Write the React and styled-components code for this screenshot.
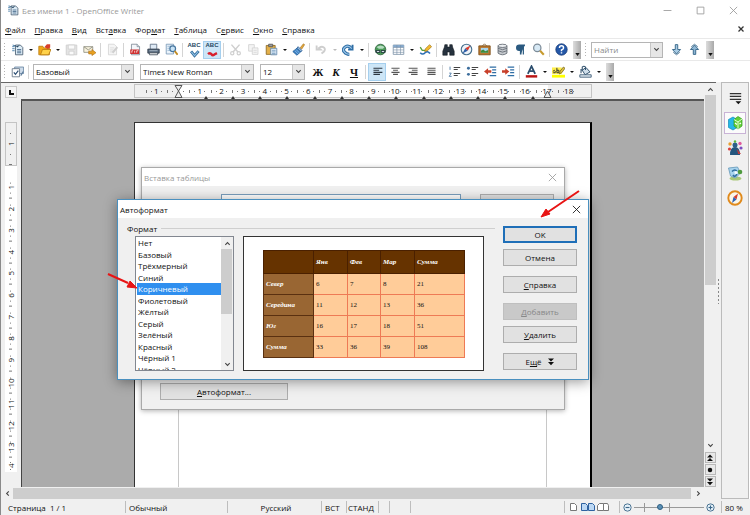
import React from 'react'
import styled, { createGlobalStyle, css } from 'styled-components'

const GlobalStyle = createGlobalStyle`
  * {
    box-sizing: border-box;
  }
  body {
    margin: 0;
    background: #fff;
    color: #111;
    font: 8px/11px 'Open Sans', 'Noto Sans', sans-serif;
  }
  button,
  input,
  select {
    font: inherit;
    color: inherit;
    margin: 0;
    padding: 0;
    border: 0;
    border-radius: 0;
    background: none;
  }
  ul {
    list-style: none;
    margin: 0;
    padding: 0;
  }
`

/* ---------- icons, all on a 16x16 canvas ---------- */

const sheet = 'M3 1.5h7l3 3v10H3z'

const shapes = {
  writer: (
    <>
      <path d="M1.500 4.500h3M1.500 7h3M1.500 9.500h3M2 2.500l3 1" stroke="#2c6a9a" fill="none" />
      <path d="M5.500 2.500h6l3 3v9h-9z" fill="#dcebf5" stroke="#41566b" />
      <path d="M3 2l4 2 4-1.500-3 3z" fill="#23445f" />
      <path d="M7.500 8h5M7.500 10h5M7.500 12h5" stroke="#3a5e80" />
    </>
  ),
  open: (
    <>
      <path d="M1 4h5l1 2h7v8.500H1z" fill="#f0a818" stroke="#b87a10" />
      <path d="M3 14.500l2.500-6.500H16l-3 6.500z" fill="#ffd24a" stroke="#b87a10" />
      <path d="M8 5l3-3.500h4v4l-3 2z" fill="#d8402c" />
    </>
  ),
  save: (
    <>
      <path d="M1.500 2.500h13v12h-13z" fill="#e4e4e4" stroke="#cdcdcd" />
      <path d="M4 2.500h8v5H4zM5 10h6v4.500H5z" fill="#fafafa" stroke="#cfcfcf" />
    </>
  ),
  mail: (
    <>
      <path d="M1 4.500h11v7H1z" fill="#f7f2dd" stroke="#8d8d80" />
      <path d="M1 4.500l5.500 4 5.500-4" fill="none" stroke="#8d8d80" />
      <path d="M7 10h4V8l5 4-5 3.500v-2H7z" fill="#e8a020" stroke="#a86a10" strokeWidth=".7" />
    </>
  ),
  edit: (
    <>
      <path d={sheet} fill="#f5f5f5" stroke="#d4d4d4" />
      <path d="M5 6h5M5 8.500h4M5 11h3" stroke="#d8d8d8" />
      <path d="M8 12l6-7" stroke="#cfcfcf" strokeWidth="2.500" />
    </>
  ),
  pdf: (
    <>
      <path d={sheet} fill="#f4f6fa" stroke="#7b8794" />
      <path d="M10 1.500v3h3" fill="#fff" stroke="#7b8794" />
      <path d="M1.500 8h11v5.500h-11z" fill="#cf2c2c" />
      <path d="M3.500 12V9.500h1.500M7 9.500V12M9.500 12V9.500h2" stroke="#fff" fill="none" strokeWidth=".9" />
    </>
  ),
  print: (
    <>
      <path d="M4 1.500h8V8H4z" fill="#dfeaf5" stroke="#5a6b80" />
      <path d="M1 7.500h14v5H1z" fill="#56687c" stroke="#2d3947" />
      <path d="M3 12h10v2.500H3z" fill="#e9e9e9" stroke="#444f5c" />
      <path d="M3 9.500h10" stroke="#b9c5d2" />
    </>
  ),
  preview: (
    <>
      <path d="M1.500 1.500h9v12h-9z" fill="#eaf3fb" stroke="#7696b4" />
      <path d="M3 4h5M3 6.500h3M3 9h3" stroke="#8fb0cc" />
      <circle cx="9.500" cy="7" r="3.500" fill="#c8e2f5" stroke="#47769f" strokeWidth="1.500" />
      <path d="M12 10l3.500 4.500" stroke="#c18a20" strokeWidth="2.200" />
    </>
  ),
  spell: (
    <>
      <path d="M3 6.500l5 6L14 6" stroke="#2f6899" strokeWidth="4" fill="none" />
      <path d="M3.500 7l4.500 5.500L13.500 6.500" stroke="#8fc0e4" strokeWidth="1.500" fill="none" />
    </>
  ),
  autospell: (
    <path d="M1.500 10.500q3-3 5 0t5 0l3-1.500" stroke="#d8202c" strokeWidth="3.500" fill="none" />
  ),
  cut: (
    <>
      <path d="M3 2l8 9M13 2L5 11" stroke="#cfcfcf" strokeWidth="1.800" />
      <circle cx="4" cy="12.500" r="2" fill="none" stroke="#cfcfcf" strokeWidth="1.500" />
      <circle cx="12" cy="12.500" r="2" fill="none" stroke="#cfcfcf" strokeWidth="1.500" />
    </>
  ),
  copy: (
    <>
      <path d="M2 2h7v8H2z" fill="#f4f4f4" stroke="#d2d2d2" />
      <path d="M6.500 6h7v8h-7z" fill="#f4f4f4" stroke="#d2d2d2" />
      <path d="M8 9h4M8 11.500h4" stroke="#d8d8d8" />
    </>
  ),
  paste: (
    <>
      <path d="M1.500 3h11v11h-11z" fill="#e3b04b" stroke="#8a6520" />
      <path d="M4.500 1.500h5v3h-5z" fill="#9c9c9c" stroke="#555" />
      <path d="M7 6.500h7.500v8H7z" fill="#e6f0fa" stroke="#5b84ab" />
      <path d="M8.500 9h4.500M8.500 11h4.500M8.500 13h4.500" stroke="#6f98bd" />
    </>
  ),
  brush: (
    <>
      <path d="M10 6l4-5 1.500 1L12 7.500z" fill="#e7a93a" stroke="#9a6a18" strokeWidth=".7" />
      <path d="M7.500 4.500l5 5-2 1.500-4.500-4.500z" fill="#8fb6dc" stroke="#2a5d94" />
      <path d="M6 6.500l4.500 4.500L6 15l-5-4.500z" fill="#3c82c6" stroke="#235c95" />
      <path d="M3.500 9.500l4 4M5 8l4 4" stroke="#b7d6f0" strokeWidth=".7" />
    </>
  ),
  undo: (
    <path d="M2 3v5h5L5 6q4-3 6.500 0T8 13" fill="none" stroke="#cecece" strokeWidth="2.300" />
  ),
  redo: (
    <>
      <path d="M13 2v6H7.500" fill="none" stroke="#2f6ea5" strokeWidth="2.300" />
      <path d="M12 7Q8 2 4 5t-1 6q2 3 6 3" fill="none" stroke="#2f6ea5" strokeWidth="4" />
      <path d="M12 7Q8 2 4 5t-1 6q2 3 6 3" fill="none" stroke="#9cc7ea" strokeWidth="1.500" />
    </>
  ),
  globe: (
    <>
      <circle cx="8" cy="8" r="6.500" fill="#4b9a58" stroke="#2d5f3c" />
      <path d="M3 5q5-4 10 0l-2 2H6z" fill="#b5dcc0" />
      <path d="M2 10.500h5.500M8.500 10.500H14" stroke="#22303c" strokeWidth="3" />
      <path d="M3.500 10.500h3M9.500 10.500h3" stroke="#dfe8ee" strokeWidth="1.200" />
    </>
  ),
  table: (
    <>
      <path d="M1.500 2.500h13v11.500h-13z" fill="#fff" stroke="#7d93a8" />
      <path d="M1.500 2.500h13v3h-13z" fill="#86a9cc" />
      <path d="M1.500 5.500h13M1.500 8.500h13M1.500 11.500h13M6 2.500V14M10.500 2.500V14" stroke="#7d93a8" strokeWidth=".8" />
    </>
  ),
  draw: (
    <>
      <path d="M1.500 12q3 3 6 0t6 1" stroke="#2c6fb4" strokeWidth="2" fill="none" />
      <path d="M1.500 5l2.500 4h4" stroke="#58a03c" strokeWidth="1.600" fill="none" />
      <path d="M7 10.500l1-3.500 5-5 2.500 2.500-5 5z" fill="#f4b92c" stroke="#96701c" strokeWidth=".8" />
    </>
  ),
  find: (
    <path
      d="M3.500 2h3v3h3V2h3l.5 3 2 5v5H9.500v-4h-3v4H1v-5l2-5z"
      fill="#26323e"
      stroke="#10171e"
      strokeWidth=".7"
    />
  ),
  navigator: (
    <>
      <circle cx="8" cy="8" r="6.500" fill="#eef3f8" stroke="#47708f" strokeWidth="1.400" />
      <path d="M13 3L9.500 9.500l-3-3z" fill="#d93a2c" />
      <path d="M3 13l3.500-6.500 3 3z" fill="#2d5fa8" />
    </>
  ),
  gallery: (
    <>
      <path d="M5.500 3.500L8 1l2.500 2.500" fill="none" stroke="#7a5a2c" />
      <path d="M1 3.500h14v11H1z" fill="#b9762c" stroke="#7b4c16" />
      <path d="M3.500 6h9v6h-9z" fill="#a9d6ef" />
      <path d="M3.500 12V9.500l3-1.500 2.500 2 3.500-1.500V12z" fill="#3e8a3a" />
    </>
  ),
  database: (
    <>
      <path d="M2.500 3.500v9q5.500 4 11 0v-9z" fill="#c3c7cc" stroke="#5c646c" />
      <ellipse cx="8" cy="3.500" rx="5.500" ry="2" fill="#eceff2" stroke="#5c646c" />
      <path d="M2.500 6.500q5.500 3.500 11 0M2.500 9.500q5.500 3.500 11 0" stroke="#5c646c" fill="none" />
    </>
  ),
  marks: (
    <path d="M13.500 2.500H6.500a3.200 3.200 0 0 0 0 6.500H8V14M8.500 2.500V14M11.500 2.500V14" fill="#2b5a80" stroke="#2b5a80" strokeWidth="1.500" />
  ),
  zoom: (
    <>
      <circle cx="6.500" cy="6" r="4.500" fill="#d7e9f5" stroke="#7c8b98" strokeWidth="1.500" />
      <path d="M10 9.500l4.500 5" stroke="#c79a2e" strokeWidth="2.500" />
    </>
  ),
  help: (
    <>
      <circle cx="8" cy="8" r="7" fill="#2458a8" stroke="#173a78" />
      <path d="M5.500 6q0-2.500 2.500-2.500T10.500 6Q10.500 7.500 8 8.500V10M8 11.500v1.500" fill="none" stroke="#fff" strokeWidth="1.800" />
    </>
  ),
  down: (
    <>
      <path d="M6.500 2h3v6h3.500L8 13.500 3 8h3.500z" fill="#a8cbe4" stroke="#3b6a8c" strokeWidth="1.200" />
      <path d="M4 11.500l4 3 4-3" fill="none" stroke="#3b6a8c" />
    </>
  ),
  up: (
    <>
      <path d="M6.500 14h3V8H13L8 2.500 3 8h3.500z" fill="#8db6d4" stroke="#3b6a8c" strokeWidth="1.200" />
      <path d="M4 4.500l4-3 4 3" fill="none" stroke="#3b6a8c" />
    </>
  ),
  styles: (
    <>
      <path d="M4.500 2.500h11v8h-11z" fill="#cfdcea" stroke="#62809e" />
      <path d="M1.500 4.500h9v10h-9z" fill="#fff" stroke="#5f6f80" />
      <path d="M3.500 9l2 2.500L9 7" fill="none" stroke="#2d4f74" strokeWidth="1.500" />
      <path d="M12 13l3-5" stroke="#62809e" strokeWidth="1.500" />
    </>
  ),
  left: <path d="M3 4h11M3 6.500h7M3 9h11M3 11.500h8" stroke="#2c3640" strokeWidth="1.400" />,
  center: <path d="M3 4h10M5 6.500h6M3 9h10M5 11.500h6" stroke="#555" strokeWidth="1.400" />,
  right: <path d="M2 4h11M6 6.500h7M2 9h11M5 11.500h8" stroke="#555" strokeWidth="1.400" />,
  justify: <path d="M3 4h10M3 6.500h10M3 9h10M3 11.500h10" stroke="#555" strokeWidth="1.400" />,
  numbers: (
    <>
      <path d="M2.500 2v4M1.500 10h2.500l-2.500 4h3" fill="none" stroke="#3c6d9c" />
      <path d="M7 3h8M7 5.500h5M7 10.500h8M7 13h5" stroke="#444" strokeWidth="1.300" />
    </>
  ),
  bullets: (
    <>
      <circle cx="3" cy="4" r="1.800" fill="#3c6d9c" />
      <circle cx="3" cy="11.500" r="1.800" fill="#3c6d9c" />
      <path d="M7 3h8M7 5.500h5M7 10.500h8M7 13h5" stroke="#444" strokeWidth="1.300" />
    </>
  ),
  outdent: (
    <>
      <path d="M7 2.500h8M10 6h5M10 9.500h5M7 13h8" stroke="#2f6ea5" strokeWidth="1.500" />
      <path d="M0 8l5-4v2.500h4v3H5V12z" fill="#c8402a" />
    </>
  ),
  indent: (
    <>
      <path d="M7 2.500h8M10 6h5M10 9.500h5M7 13h8" stroke="#2f6ea5" strokeWidth="1.500" />
      <path d="M9 8L4 4v2.500H0v3h4V12z" fill="#c8402a" />
    </>
  ),
  fontColor: (
    <>
      <path d="M3.500 11L8 1.500 12.500 11M5.500 7.500h5" fill="none" stroke="#2c4f6e" strokeWidth="2.200" />
      <path d="M1 12.500h14v3H1z" fill="#b81414" />
    </>
  ),
  highlight: (
    <>
      <path d="M0 12h16v3.500H0z" fill="#ff0" />
      <path d="M0 3h12v8H0z" fill="#ffef4a" />
      <path d="M1 8q2-3 3 0v1.500H1.500M6 3.500v6h2.500V6.500H6" fill="none" stroke="#333" strokeWidth="1.200" />
      <path d="M9 11l1-3.500 4-5 2 1.500-4 5.500z" fill="#e3c43a" stroke="#6a5a1c" strokeWidth=".9" />
    </>
  ),
  fill: (
    <>
      <path d="M4 6.500L8.500 3l5 5.500-6 3.500z" fill="#cfdeea" stroke="#33536f" strokeWidth="1.200" />
      <path d="M4 7V2.500q2-2 4 0V6M2.500 5v5" fill="none" stroke="#33536f" strokeWidth="1.300" />
      <path d="M1 12h14v3H1z" fill="#dfe9f0" stroke="#33536f" />
    </>
  ),
  properties: (
    <>
      <path d="M1.500 4.500L6 2l4 2.500v8L6 15l-4.500-2.500z" fill="#25b8e8" stroke="#118ab8" strokeWidth=".7" />
      <path d="M7 4.500l4-3 4 2.500v7L11 14l-4-3z" fill="#66d03a" stroke="#2f9a1c" strokeWidth=".7" />
      <path d="M7 4.500L11 7l4-3M11 7v7" fill="none" stroke="#dfffd0" />
      <path d="M8 8l2 1.500M12.500 9l1.500-1" stroke="#fff" strokeWidth="1.200" />
    </>
  ),
  people: (
    <>
      <circle cx="8" cy="5" r="2.500" fill="#2d5f8a" />
      <path d="M3 15q0-8 5-8t5 8z" fill="#24567e" />
      <circle cx="3" cy="4" r="1.700" fill="#e8a030" />
      <circle cx="13" cy="3.500" r="1.700" fill="#e05a9c" />
      <circle cx="2.500" cy="9" r="1.600" fill="#d94040" />
      <circle cx="14" cy="8" r="1.600" fill="#7a4cc0" />
      <path d="M10 9l4 5h-3z" fill="#c03c3c" />
      <circle cx="8" cy="1.500" r="1.200" fill="#5bb840" />
    </>
  ),
  pictures: (
    <>
      <ellipse cx="8.500" cy="13.500" rx="6" ry="2" fill="#a9c878" />
      <path d="M1.500 3l9-1 3 6-5 5-5-2z" fill="#a8d4ee" stroke="#6397b8" strokeWidth=".8" />
      <path d="M5 6.500q3-3 5 0M6 10q2 3 4-1" fill="none" stroke="#2e6c9e" strokeWidth="1.600" />
      <circle cx="13" cy="7" r="2.300" fill="#4f9a3e" />
      <circle cx="9" cy="7.500" r="1.500" fill="#f6fbff" />
    </>
  ),
  compass: (
    <>
      <circle cx="8" cy="8" r="6.700" fill="#fbf6e8" stroke="#e08a1c" strokeWidth="1.900" />
      <path d="M11 3.500L9.500 9.500l-3-2.500z" fill="#d63c2c" />
      <path d="M5 13l1.500-6 3 2.500z" fill="#2e62b4" />
    </>
  ),
  more: <path d="M2 1h12L8 7zM2 8h12l-6 6.500z" fill="#111" />,
  overflow: <path d="M1 3h14L8 13z" fill="#111" />,
  prev: <path d="M2 7l6-6 6 6zM2 14l6-6 6 6z" fill="#111" />,
  dot: <circle cx="8" cy="8" r="4.500" fill="#111" />,
  chevronUp: <path d="M3 11l5-5 5 5" fill="none" stroke="#444" strokeWidth="2.500" />,
  chevronDown: <path d="M3 5l5 5 5-5" fill="none" stroke="#444" strokeWidth="2.500" />,
  chevronLeft: <path d="M11 3L6 8l5 5" fill="none" stroke="#444" strokeWidth="2.500" />,
  chevronRight: <path d="M5 3l5 5-5 5" fill="none" stroke="#444" strokeWidth="2.500" />,
  close: <path d="M1.500 1.500l13 13M14.500 1.500l-13 13" stroke="currentColor" strokeWidth="1.500" />,
  closeDoc: <path d="M3 3l10 10M13 3L3 13" stroke="#333" strokeWidth="2.500" />,
  minimize: <path d="M1 8h14" stroke="#999" strokeWidth="1.500" />,
  maximize: <path d="M2 2h12v12H2z" fill="none" stroke="#999" strokeWidth="1.500" />,
  minus: (
    <>
      <circle cx="8" cy="8" r="6.500" fill="#e4f0f8" stroke="#3b6688" strokeWidth="1.600" />
      <path d="M4.500 8h7" stroke="#3b6688" strokeWidth="2" />
    </>
  ),
  plus: (
    <>
      <circle cx="8" cy="8" r="6.500" fill="#e4f0f8" stroke="#3b6688" strokeWidth="1.600" />
      <path d="M4.500 8h7M8 4.500v7" stroke="#3b6688" strokeWidth="2" />
    </>
  ),
  sidebarMenu: (
    <>
      <path d="M1 2h14M1 5.500h14M1 9h14" stroke="#333" strokeWidth="1.500" />
      <path d="M8 11.500h7L11.500 15z" fill="#111" />
    </>
  ),
}

const Icon = ({ name, size = 12 }) => (
  <svg width={size} height={size} viewBox="0 0 16 16" aria-hidden="true">
    {shapes[name]}
  </svg>
)

/* ---------- window frame ---------- */

const Window = styled.div`
  display: flex;
  flex-direction: column;
  min-height: 100vh;
  border-left: 1px solid #8a8a8a;
  background: #fff;
`

const TitleBar = styled.header`
  display: flex;
  align-items: center;
  height: 20px;
  padding: 0 12px 0 6px;
  color: #999;
`

const Title = styled.h1`
  flex: 1;
  margin: 0 0 0 3px;
  font-size: 8px;
  font-weight: 400;
`

const WindowButtons = styled.div`
  display: flex;
  gap: 24px;
`

const PlainButton = styled.button`
  display: flex;
  align-items: center;
  justify-content: center;
`

const MenuBar = styled.nav`
  display: flex;
  align-items: center;
  gap: 9px;
  height: 18px;
  padding: 0 5px 0 4px;
`

const MenuItem = styled.button`
  &:last-of-type {
    margin-left: auto;
  }
`

const Toolbar = styled.div`
  display: flex;
  align-items: center;
  height: 22px;
  padding-left: 2px;
  border-top: 1px solid #e9e9e9;
`

const Grip = styled.span`
  width: 5px;
  height: 16px;
  background: radial-gradient(circle, #b4b4b4 1px, transparent 1px) 0 0 / 3px 3px repeat-y;
`

const Separator = styled.span`
  flex: none;
  width: 5px;
  height: 14px;
  background: linear-gradient(#d4d4d4, #d4d4d4) center / 1px 100% no-repeat;
`

const ToolButton = styled.button`
  display: flex;
  flex-direction: column;
  flex: none;
  align-items: center;
  justify-content: center;
  width: 18px;
  height: 18px;
  ${({ $active }) =>
    $active &&
    css`
      background: #cde6f7;
      outline: 1px solid #a5cfee;
      outline-offset: -1px;
    `}
`

const Caret = styled.button`
  flex: none;
  width: 9px;
  height: 18px;
  &::after {
    content: '';
    display: block;
    width: 0;
    margin: auto;
    border: 2px solid transparent;
    border-top-color: ${({ disabled }) => (disabled ? '#bbb' : '#111')};
    border-bottom: 0;
  }
`

const Abc = styled.b`
  height: 5px;
  font: bold 6px/6px 'Liberation Sans', sans-serif;
  color: #24445f;
`

const Glyph = styled.span`
  font: bold 11px/14px 'Liberation Serif', serif;
  font-style: ${({ $italic }) => ($italic ? 'italic' : 'normal')};
  text-decoration: ${({ $underline }) => ($underline ? 'underline' : 'none')};
`

const Overflow = styled.button`
  display: flex;
  align-items: flex-end;
  justify-content: center;
  flex: none;
  width: 8px;
  height: 18px;
  padding-bottom: 2px;
  margin: 0 3px;
  background: linear-gradient(90deg, #ddd, #a9a9a9);
`

const Combo = styled.div`
  display: flex;
  flex: none;
  width: ${({ $width }) => $width}px;
  height: 16px;
  margin: 0 4px 0 2px;
  border: 1px solid #b5b5b5;
  background: #fff;
  select,
  input {
    flex: 1;
    min-width: 0;
    padding-left: 2px;
    appearance: none;
    outline: 0;
  }
  input::placeholder {
    color: #8a8a8a;
    opacity: 1;
  }
`

const ComboArrow = styled.span`
  display: flex;
  align-items: center;
  justify-content: center;
  width: 12px;
  border-left: 1px solid #c6c6c6;
  background: #e6e6e6;
`

/* ---------- document area ---------- */

const Main = styled.main`
  display: flex;
  flex: 1;
`

const Editor = styled.div`
  display: grid;
  flex: 1;
  grid-template: 18px 1fr 12px / 20px 1fr 12px;
  min-width: 0;
  background: #f0f0f0;
  border-top: 1px solid #666;
`

const TabCorner = styled.button`
  align-self: center;
  width: 12px;
  height: 12px;
  margin-left: 4px;
  border: 1px solid #c9c9c9;
  background: #f6f6f6;
  &::after {
    content: '';
    display: block;
    width: 3px;
    height: 3px;
    margin: auto;
    border: solid #111;
    border-width: 0 0 2px 2px;
  }
`

const RulerTrack = styled.div`
  display: flex;
  justify-content: center;
  align-items: center;
  border-bottom: 2px solid #555;
`

const Ruler = styled.div`
  position: relative;
  display: grid;
  grid-template-columns: repeat(20, 1fr);
  width: 456px;
  height: 12px;
  padding: 0 11px;
  outline: 1px solid #c4c4c4;
  background: linear-gradient(90deg, #f0f0f0 43px, #fff 43px 413px, #f0f0f0 413px);
`

const dotMark = 'linear-gradient(#777, #777)'

const Mark = styled.span`
  text-align: center;
  line-height: 12px;
  background: ${dotMark} 0 center / 1px 3px no-repeat,
    ${dotMark} 25% center / 1px 1px no-repeat, ${dotMark} 75% center / 1px 1px no-repeat;
`

const TabStops = styled.div`
  position: absolute;
  left: 69px;
  right: 56px;
  bottom: -2px;
  display: flex;
  justify-content: space-between;
  i {
    width: 4px;
    border: 2px solid transparent;
    border-bottom: 3px solid #333;
    border-top: 0;
  }
`

const IndentMarker = styled.svg`
  position: absolute;
  top: 0;
  left: ${({ $at }) => $at}px;
`

const VerticalRuler = styled.div`
  display: flex;
  flex-direction: column;
  width: 12px;
  height: 350px;
  margin: 21px 0 0 4px;
  overflow: hidden;
  background: #fff;
`

const VerticalMark = styled.span`
  flex: none;
  height: ${({ $margin }) => ($margin ? 44 : 22)}px;
  writing-mode: vertical-rl;
  transform: rotate(180deg);
  text-align: center;
  line-height: 12px;
  background: ${dotMark} center 0 / 3px 1px no-repeat,
    ${dotMark} center 25% / 1px 1px no-repeat, ${dotMark} center 75% / 1px 1px no-repeat;
  ${({ $margin }) =>
    $margin &&
    css`
      border: 1px solid #c4c4c4;
      line-height: 10px;
      background-color: #f0f0f0;
    `}
`

const VerticalMarks = styled.div`
  display: grid;
  flex: none;
  grid-template-rows: repeat(13, 1fr) 16px;
  height: 297px;
  margin-top: 11px;
  ${VerticalMark} {
    height: auto;
  }
`

const Canvas = styled.div`
  display: flex;
  justify-content: center;
  padding-top: 21px;
  border-left: 1px solid #444;
  background: #ababab;
`

const Page = styled.article`
  width: 458px;
  padding: 44px 43px 0;
  border: solid #333;
  border-width: 1px 2px 0 1px;
  border-right-color: #000;
  background: #fff;
`

const TextArea = styled.div`
  height: 100%;
  border: 1px solid #c8c8c8;
  border-width: 1px 1px 0;
`

const ScrollBar = styled.div`
  display: flex;
  flex-direction: ${({ $vertical }) => ($vertical ? 'column' : 'row')};
  align-items: center;
  grid-row: ${({ $vertical }) => ($vertical ? '1 / 3' : '3')};
  grid-column: ${({ $vertical }) => ($vertical ? '3' : '1 / 3')};
  background: #f0f0f0;
`

const ScrollButton = styled(PlainButton)`
  flex: none;
  width: 12px;
  height: 12px;
`

const PageButton = styled(ScrollButton)`
  width: 11px;
  height: 11px;
  margin-top: 1px;
  border: 1px solid #b9b9b9;
  background: #e8e8e8;
`

const VerticalThumb = styled.div`
  width: 11px;
  height: 190px;
  margin-bottom: auto;
  background: #cdcdcd;
`

const HorizontalThumb = styled.div`
  flex: 1;
  height: 11px;
  margin-right: 1px;
  background: #cdcdcd;
`

const Splitter = styled.div`
  display: flex;
  align-items: center;
  justify-content: center;
  width: 5px;
  background: #f0f0f0;
  &::after {
    content: '';
    width: 3px;
    height: 26px;
    background: radial-gradient(circle, #888 1px, transparent 1px) 0 0 / 3px 4px;
  }
`

const SideBar = styled.aside`
  display: flex;
  flex-direction: column;
  align-items: center;
  gap: 3px;
  width: 28px;
  margin-right: 1px;
  padding-top: 4px;
  border: 1px solid #bbb;
  background: #f0f0f0;
`

const SideButton = styled(PlainButton)`
  width: 22px;
  height: 22px;
  border: 1px solid ${({ $active }) => ($active ? '#c9b3d6' : 'transparent')};
  background: ${({ $active }) => ($active ? '#fbfbfb' : 'none')};
`

/* ---------- status bar ---------- */

const StatusBar = styled.footer`
  display: flex;
  align-items: center;
  height: 16px;
  background: #f0f0f0;
`

const StatusCell = styled.span`
  display: flex;
  align-items: center;
  justify-content: ${({ $align }) => $align || 'flex-start'};
  width: ${({ $width }) => $width}px;
  flex: ${({ $width }) => ($width ? 'none' : '1')};
  height: 12px;
  padding-left: ${({ $pad = 3 }) => $pad}px;
  border-right: 1px solid #bdbdbd;
  white-space: pre;
  &:last-child {
    border-right: 0;
  }
`

const ZoomSlider = styled.input`
  width: 70px;
  height: 10px;
  margin: 0 2px;
  appearance: none;
  background: linear-gradient(#999, #999) 10px center / 1px 9px no-repeat,
    linear-gradient(#999, #999) 35px center / 1px 9px no-repeat,
    linear-gradient(#999, #999) center / 100% 1px no-repeat;
  &::-webkit-slider-thumb {
    appearance: none;
    width: 6px;
    height: 6px;
    border-radius: 50%;
    border: 1px solid #2f5f82;
    background: #5a8fb5;
  }
`

/* ---------- dialogs ---------- */

const Dialog = styled.section`
  position: absolute;
  left: ${({ $x }) => $x}px;
  top: ${({ $y }) => $y}px;
  width: ${({ $width }) => $width}px;
  height: ${({ $height }) => $height}px;
  border: 1px solid ${({ $active }) => ($active ? '#4a90bf' : '#a9a9a9')};
  background: #f0f0f0;
  box-shadow: ${({ $active }) =>
    $active ? '0 2px 12px rgba(0, 0, 0, 0.4)' : '0 1px 5px rgba(0, 0, 0, 0.3)'};
`

const DialogTitle = styled.header`
  display: flex;
  align-items: center;
  justify-content: space-between;
  height: 18px;
  padding: 0 7px 0 2px;
  background: #fff;
  color: ${({ $inactive }) => ($inactive ? '#999' : '#111')};
  h2 {
    margin: 0;
    font-size: 8px;
    font-weight: 400;
  }
`

const BackBody = styled.div`
  display: flex;
  flex-direction: column;
  justify-content: space-between;
  height: 222px;
  padding: 8px 10px 8px 18px;
`

const NameRow = styled.div`
  display: flex;
  gap: 19px;
  padding-left: 61px;
  input {
    flex: 1;
    height: 16px;
    border: 1px solid #7a9ebd;
    background: #fff;
  }
`

const DialogButton = styled.button`
  display: flex;
  align-items: center;
  justify-content: center;
  gap: 5px;
  width: ${({ $width = 74 }) => $width}px;
  height: 17px;
  border: 1px solid #adadad;
  background: #e1e1e1;
  ${({ $default }) =>
    $default &&
    css`
      border: 2px solid #1f6fb8;
    `}
  &:disabled {
    border-color: #bfbfbf;
    background: #c9c9c9;
    color: #888;
  }
`

const FormatBody = styled.div`
  display: flex;
  gap: 8px;
  padding: 4px 11px 8px 9px;
`

const FormatGroup = styled.fieldset`
  flex: 1;
  min-width: 0;
  margin: 0;
  padding: 0;
  border: 0;
  legend {
    display: flex;
    align-items: center;
    gap: 4px;
    width: 100%;
    padding: 0;
    height: 12px;
  }
  legend::after {
    content: '';
    flex: 1;
    height: 1px;
    background: #cfcfcf;
  }
`

const FormatColumns = styled.div`
  display: flex;
  gap: 9px;
  padding: 2px 11px 0 8px;
`

const ListBox = styled.div`
  display: flex;
  width: 99px;
  height: 135px;
  border: 1px solid #828790;
  background: #fff;
  overflow: hidden;
  ul {
    display: grid;
    flex: 1;
    grid-template-rows: repeat(12, 1fr);
    height: 138px;
    padding-left: 1px;
  }
`

const ListItem = styled.li`
  padding-left: 1px;
  color: ${({ $selected }) => ($selected ? '#fff' : '#111')};
  background: ${({ $selected }) => ($selected ? '#2f8fef' : 'none')};
`

const ListScroll = styled.div`
  display: flex;
  flex-direction: column;
  justify-content: space-between;
  width: 12px;
  background: #f0f0f0;
`

const ListThumb = styled.div`
  flex: none;
  width: 11px;
  height: 65px;
  margin-bottom: auto;
  background: #cdcdcd;
`

const Preview = styled.div`
  flex: 1;
  padding: 13px 18px 12px 19px;
  border: 1px solid #333;
  background: #fff;
`

const PreviewTable = styled.table`
  width: 100%;
  table-layout: fixed;
  border-collapse: collapse;
  font: 7px/8px 'Liberation Serif', serif;
  tbody tr {
    height: 21px;
  }
  thead tr {
    height: 23px;
  }
  th,
  td {
    padding: 0 0 0 2px;
    text-align: left;
    border: 1px solid #ee7a55;
    background: #ffcc99;
  }
  th {
    font-style: italic;
    color: #fff;
    border-color: #5a3010;
    background: #996633;
  }
  thead th {
    border-color: #4a2000;
    background: #663300;
  }
`

const ActionColumn = styled.div`
  display: flex;
  flex-direction: column;
  gap: 10px;
  padding-top: 4px;
`

const ActionPair = styled.div`
  display: flex;
  flex-direction: column;
  gap: 6px;
`

const Arrows = styled.svg`
  position: absolute;
  left: 100px;
  top: 180px;
  pointer-events: none;
`

const menu = [
  ['', 'Ф', 'айл'],
  ['', 'П', 'равка'],
  ['', 'В', 'ид'],
  ['Вст', 'а', 'вка'],
  ['Фор', 'м', 'ат'],
  ['', 'Т', 'аблица'],
  ['С', 'е', 'рвис'],
  ['', 'О', 'кно'],
  ['', 'С', 'правка'],
]

// "|" draws a separator, "v" a drop-down caret, "x" a disabled caret
const standardTools =
  'writer v open v save mail | edit | pdf print preview | spell autospell | cut copy paste v brush | undo x redo v | globe table v draw | find navigator gallery database marks zoom | help'.split(
    ' '
  )

const formats = [
  'Нет',
  'Базовый',
  'Трёхмерный',
  'Синий',
  'Коричневый',
  'Фиолетовый',
  'Жёлтый',
  'Серый',
  'Зелёный',
  'Красный',
  'Чёрный 1',
  'Чёрный 2',
]

const rows = [
  ['Север', 6, 7, 8, 21],
  ['Середина', 11, 12, 13, 36],
  ['Юг', 16, 17, 18, 51],
  ['Сумма', 33, 36, 39, 108],
]

const Tools = ({ items, active }) =>
  items.map((name, i) => {
    if (name === '|') return <Separator key={i} />
    if (name === 'v' || name === 'x') {
      return <Caret key={i} disabled={name === 'x'} aria-label="Список" />
    }
    const spelling = name === 'spell' || name === 'autospell'
    return (
      <ToolButton key={i} $active={name === active} aria-label={name}>
        {spelling && <Abc>ABC</Abc>}
        <Icon name={name} size={spelling ? 11 : 13} />
      </ToolButton>
    )
  })

const SelectBox = ({ label, value, width }) => (
  <Combo $width={width}>
    <select aria-label={label} defaultValue={value}>
      <option>{value}</option>
    </select>
    <ComboArrow>
      <Icon name="chevronDown" size={7} />
    </ComboArrow>
  </Combo>
)

const StandardToolbar = () => (
  <Toolbar>
    <Grip />
    <Tools items={standardTools} active="autospell" />
    <Overflow aria-label="Ещё">
      <Icon name="overflow" size={5} />
    </Overflow>
    <Grip />
    <Combo $width={72}>
      <input aria-label="Найти" placeholder="Найти" />
      <ComboArrow>
        <Icon name="chevronDown" size={7} />
      </ComboArrow>
    </Combo>
    <Tools items={['down', 'up']} />
    <Overflow aria-label="Ещё">
      <Icon name="overflow" size={5} />
    </Overflow>
  </Toolbar>
)

const FormatToolbar = () => (
  <Toolbar>
    <Grip />
    <Tools items={['styles']} />
    <Separator />
    <SelectBox label="Стиль" value="Базовый" width={101} />
    <SelectBox label="Гарнитура" value="Times New Roman" width={114} />
    <SelectBox label="Кегль" value="12" width={45} />
    <ToolButton>
      <Glyph>Ж</Glyph>
    </ToolButton>
    <ToolButton>
      <Glyph $italic>К</Glyph>
    </ToolButton>
    <ToolButton>
      <Glyph $underline>Ч</Glyph>
    </ToolButton>
    <Tools
      items={'| left center right justify | numbers bullets outdent indent | fontColor v highlight v fill v'.split(' ')}
      active="left"
    />
    <Overflow aria-label="Ещё">
      <Icon name="overflow" size={5} />
    </Overflow>
  </Toolbar>
)

const HorizontalRuler = () => (
  <RulerTrack>
    <Ruler>
      {Array.from({ length: 20 }, (_, i) => (
        <Mark key={i}>{i === 1 ? '' : Math.abs(i - 1) || 1}</Mark>
      ))}
      <TabStops>
        {Array.from({ length: 13 }, (_, i) => (
          <i key={i} />
        ))}
      </TabStops>
      <IndentMarker $at={39} width="9" height="13" viewBox="0 0 9 13">
        <path d="M1 .5h7L4.500 6zM4.500 6L8 12.500H1z" fill="#eee" stroke="#555" />
      </IndentMarker>
      <IndentMarker $at={408} width="9" height="13" viewBox="0 0 9 13">
        <path d="M4.500 6L8 12.500H1z" fill="#eee" stroke="#555" />
      </IndentMarker>
    </Ruler>
  </RulerTrack>
)

const InsertTableDialog = () => (
  <Dialog $x={141} $y={167} $width={424} $height={243}>
    <DialogTitle $inactive>
      <h2>Вставка таблицы</h2>
      <PlainButton aria-label="Закрыть">
        <Icon name="close" size={9} />
      </PlainButton>
    </DialogTitle>
    <BackBody>
      <NameRow>
        <input aria-label="Название" />
        <DialogButton />
      </NameRow>
      <DialogButton $width={128}>
        <span>
          <u>А</u>втоформат...
        </span>
      </DialogButton>
    </BackBody>
  </Dialog>
)

const AutoFormatDialog = () => (
  <Dialog $x={117} $y={199} $width={472} $height={181} $active>
    <DialogTitle>
      <h2>Автоформат</h2>
      <PlainButton aria-label="Закрыть">
        <Icon name="close" size={9} />
      </PlainButton>
    </DialogTitle>
    <FormatBody>
      <FormatGroup>
        <legend>Формат</legend>
        <FormatColumns>
          <ListBox>
            <ul role="listbox" aria-label="Формат">
              {formats.map(name => (
                <ListItem
                  key={name}
                  role="option"
                  aria-selected={name === 'Коричневый'}
                  $selected={name === 'Коричневый'}
                >
                  {name}
                </ListItem>
              ))}
            </ul>
            <ListScroll>
              <ScrollButton aria-label="Вверх">
                <Icon name="chevronUp" size={7} />
              </ScrollButton>
              <ListThumb />
              <ScrollButton aria-label="Вниз">
                <Icon name="chevronDown" size={7} />
              </ScrollButton>
            </ListScroll>
          </ListBox>
          <Preview>
            <PreviewTable>
              <colgroup>
                <col width="50" />
                <col width="34" />
                <col width="33" />
                <col width="34" />
                <col />
              </colgroup>
              <thead>
                <tr>
                  <th />
                  <th>Янв</th>
                  <th>Фев</th>
                  <th>Мар</th>
                  <th>Сумма</th>
                </tr>
              </thead>
              <tbody>
                {rows.map(([name, ...values]) => (
                  <tr key={name}>
                    <th>{name}</th>
                    {values.map(value => (
                      <td key={value}>{value}</td>
                    ))}
                  </tr>
                ))}
              </tbody>
            </PreviewTable>
          </Preview>
        </FormatColumns>
      </FormatGroup>
      <ActionColumn>
        <ActionPair>
          <DialogButton $default>OK</DialogButton>
          <DialogButton>Отмена</DialogButton>
        </ActionPair>
        <DialogButton>
          <span>
            <u>С</u>правка
          </span>
        </DialogButton>
        <ActionPair>
          <DialogButton disabled>
            <span>
              <u>Д</u>обавить
            </span>
          </DialogButton>
          <DialogButton>
            <span>
              <u>У</u>далить
            </span>
          </DialogButton>
        </ActionPair>
        <DialogButton>
          <span>
            Е<u>щ</u>ё
          </span>
          <Icon name="more" size={8} />
        </DialogButton>
      </ActionColumn>
    </FormatBody>
  </Dialog>
)

const App = () => (
  <>
    <GlobalStyle />
    <Window>
      <TitleBar>
        <Icon name="writer" />
        <Title>Без имени 1 - OpenOffice Writer</Title>
        <WindowButtons>
          <PlainButton aria-label="Свернуть">
            <Icon name="minimize" size={9} />
          </PlainButton>
          <PlainButton aria-label="Развернуть">
            <Icon name="maximize" size={9} />
          </PlainButton>
          <PlainButton aria-label="Закрыть">
            <Icon name="close" size={9} />
          </PlainButton>
        </WindowButtons>
      </TitleBar>
      <MenuBar>
        {menu.map(([before, key, after]) => (
          <MenuItem key={key + after}>
            {before}
            <u>{key}</u>
            {after}
          </MenuItem>
        ))}
        <MenuItem aria-label="Закрыть документ">
          <Icon name="closeDoc" size={8} />
        </MenuItem>
      </MenuBar>
      <StandardToolbar />
      <FormatToolbar />
      <Main>
        <Editor>
          <TabCorner aria-label="Табуляция" />
          <HorizontalRuler />
          <VerticalRuler>
            <VerticalMark $margin>1</VerticalMark>
            <VerticalMarks>
              {Array.from({ length: 13 }, (_, i) => (
                <VerticalMark key={i}>{i + 1}</VerticalMark>
              ))}
              <VerticalMark>4</VerticalMark>
            </VerticalMarks>
          </VerticalRuler>
          <Canvas>
            <Page>
              <TextArea />
            </Page>
          </Canvas>
          <ScrollBar $vertical>
            <ScrollButton aria-label="Вверх">
              <Icon name="chevronUp" size={7} />
            </ScrollButton>
            <VerticalThumb />
            <ScrollButton aria-label="Вниз">
              <Icon name="chevronDown" size={7} />
            </ScrollButton>
            <PageButton aria-label="Предыдущая страница">
              <Icon name="prev" size={8} />
            </PageButton>
            <PageButton aria-label="Навигация">
              <Icon name="dot" size={8} />
            </PageButton>
            <PageButton aria-label="Следующая страница">
              <Icon name="more" size={8} />
            </PageButton>
          </ScrollBar>
          <ScrollBar>
            <ScrollButton aria-label="Влево">
              <Icon name="chevronLeft" size={7} />
            </ScrollButton>
            <HorizontalThumb />
            <ScrollButton aria-label="Вправо">
              <Icon name="chevronRight" size={7} />
            </ScrollButton>
          </ScrollBar>
        </Editor>
        <Splitter />
        <SideBar>
          <SideButton aria-label="Настройки панели">
            <Icon name="sidebarMenu" size={13} />
          </SideButton>
          <SideButton $active aria-label="Свойства">
            <Icon name="properties" size={16} />
          </SideButton>
          <SideButton aria-label="Стили">
            <Icon name="people" size={16} />
          </SideButton>
          <SideButton aria-label="Галерея">
            <Icon name="pictures" size={16} />
          </SideButton>
          <SideButton aria-label="Навигатор">
            <Icon name="compass" size={16} />
          </SideButton>
        </SideBar>
      </Main>
      <StatusBar>
        <StatusCell $width={125} $pad={7}>
          {'Страница  1 / 1'}
        </StatusCell>
        <StatusCell $width={102}>Обычный</StatusCell>
        <StatusCell $width={94} $align="center">
          Русский
        </StatusCell>
        <StatusCell $width={25}>ВСТ</StatusCell>
        <StatusCell $width={32} $pad={1}>
          СТАНД
        </StatusCell>
        <StatusCell $width={11} />
        <StatusCell $width={21} />
        <StatusCell $align="flex-end" />
        <StatusCell $width={55} $pad={4}>
          <svg width="42" height="10" viewBox="0 0 42 10" fill="#fff" stroke="#777">
            <path d="M1.500 1.500h4l2 2v5h-6zM28.500 8.500v-5l2-2h4v7zM34.500 1.500h4l1 2v5h-5" />
            <path d="M12.500 1.500h4l2 2v5h-6zM19.500 1.500h4l2 2v5h-6z" fill="#bcd8f4" stroke="#2f62a0" />
          </svg>
        </StatusCell>
        <StatusCell $width={102} $pad={3}>
          <Icon name="minus" size={9} />
          <ZoomSlider type="range" aria-label="Масштаб" defaultValue="36" />
          <Icon name="plus" size={9} />
        </StatusCell>
        <StatusCell $width={28}>80 %</StatusCell>
      </StatusBar>
    </Window>
    <InsertTableDialog />
    <AutoFormatDialog />
    <Arrows width="490" height="120" viewBox="0 0 490 120" fill="#e81414" stroke="#e81414">
      <path d="M479 11L448 32M8 94l20 9" strokeWidth="2" />
      <path d="M441 37l5-8 4 5zM37 108l-10-1 3-6z" />
    </Arrows>
  </>
)

export default App
